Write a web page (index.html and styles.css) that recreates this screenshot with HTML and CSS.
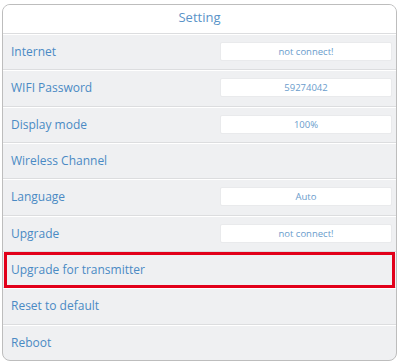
FILE: index.html
```html
<!DOCTYPE html>
<html lang="en">
<head>
    <meta charset="UTF-8">
    <meta name="viewport" content="width=device-width, initial-scale=1.0">
    <title>Setting</title>
    <link rel="stylesheet" href="styles.css">
</head>
<body>

    <div class="panel">
        <div class="header">Setting</div>

        <div class="row">
            <span class="label">Internet</span>
            <span class="value">not connect!</span>
        </div>
        <div class="row">
            <span class="label">WIFI Password</span>
            <span class="value">59274042</span>
        </div>
        <div class="row">
            <span class="label">Display mode</span>
            <span class="value">100%</span>
        </div>
        <div class="row">
            <span class="label">Wireless Channel</span>
        </div>
        <div class="row">
            <span class="label">Language</span>
            <span class="value">Auto</span>
        </div>
        <div class="row">
            <span class="label">Upgrade</span>
            <span class="value">not connect!</span>
        </div>
        <div class="row highlight">
            <span class="label">Upgrade for transmitter</span>
        </div>
        <div class="row">
            <span class="label">Reset to default</span>
        </div>
        <div class="row">
            <span class="label">Reboot</span>
        </div>
    </div>

</body>
</html>
```

FILE: styles.css
```css
* {
    margin: 0;
    padding: 0;
    box-sizing: border-box;
}

body {
    background: #fff;
    font-family: "Open Sans", Arial, sans-serif;
    color: #4a8ac4;
}

.panel {
    margin: 4px 0 0 2px;
    width: 395px;
    height: 357px;
    border: 1px solid #bdbdbd;
    border-radius: 8px;
    overflow: hidden;
    display: flex;
    flex-direction: column;
    background: #eff0f2;
}

.header {
    height: 28px;
    flex: none;
    background: #fff;
    display: flex;
    justify-content: center;
    align-items: center;
    padding-bottom: 4px;
    font-size: 13px;
    color: #5a93c8;
}

.row {
    flex: 1;
    display: flex;
    align-items: center;
    justify-content: space-between;
    padding: 0 4px 0 8px;
    border-top: 1px solid #dcdddf;
    box-shadow: inset 0 1px 0 #fff;
}

.label {
    font-size: 12px;
}

.value {
    width: 172px;
    height: 19px;
    background: #fff;
    border: 1px solid #e9eaec;
    border-radius: 2px;
    font-size: 9.5px;
    color: #6a9ccc;
    display: flex;
    justify-content: center;
    align-items: center;
}

.highlight {
    position: relative;
}

.highlight::after {
    content: "";
    position: absolute;
    top: 0;
    left: 1px;
    right: 1px;
    bottom: -1px;
    border: 3px solid #e2001a;
}
```
